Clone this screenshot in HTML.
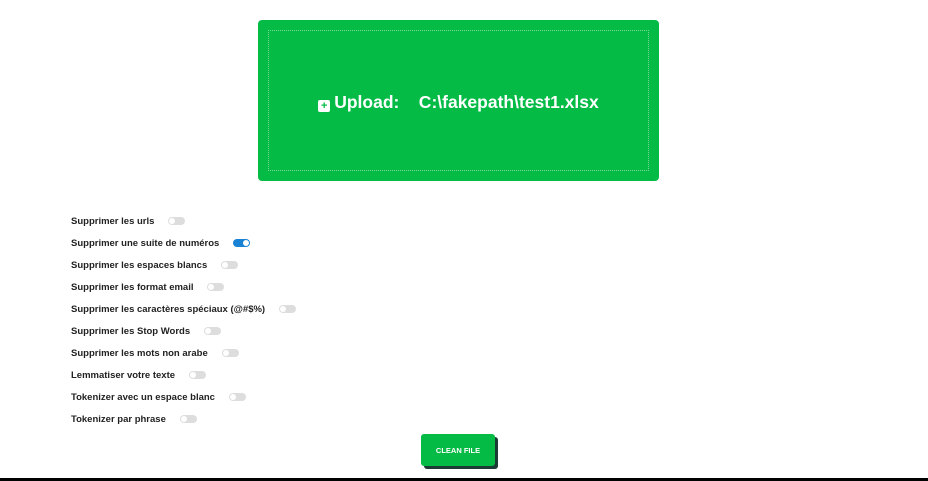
<!DOCTYPE html>
<html><head><style>
body{margin:0;width:928px;height:481px;background:#fff;position:relative;overflow:hidden;font-family:"Liberation Sans",sans-serif;}
.up{position:absolute;left:258px;top:20px;width:401px;height:161px;background:#04bb45;border-radius:4px;}
.in{position:absolute;left:10px;top:10px;right:10px;bottom:10px;border:1px dotted rgba(255,255,255,0.45);}
.t{position:absolute;left:0;right:0;top:72px;text-align:center;color:#fff;font-weight:bold;font-size:17.5px;}
.row{position:absolute;left:71px;font-size:9.5px;font-weight:bold;color:#222;height:12px;line-height:12px;}
.tg{display:inline-block;vertical-align:middle;width:17px;height:8px;border-radius:4px;background:#ddd;position:relative;margin-left:14px;margin-top:-1px;}
.tg::after{content:"";position:absolute;left:1px;top:1px;width:6px;height:6px;border-radius:50%;background:#fff;}
.tg.on{background:#1a82d4}.tg.on::after{left:10px}
.btn{position:absolute;left:421px;top:434px;width:74px;height:32px;background:#04bb45;border-radius:3px;box-shadow:3px 3px 0 #1c3b35;color:#fff;font-size:7.5px;font-weight:bold;text-align:center;line-height:34px;}
.bar{position:absolute;left:0;top:478px;width:928px;height:3px;background:#000;}
</style></head><body>
<div class="up"><div class="in"></div>
<div class="t"><span style="display:inline-block;width:12px;height:12px;background:#fff;border-radius:2px;vertical-align:-1px;margin-right:4px;color:#04bb45;font-size:11px;line-height:12px">+</span>Upload:&nbsp;&nbsp;&nbsp;&nbsp;C:\fakepath\test1.xlsx</div></div>
<div class="row" style="top:216px">Supprimer les urls<span class="tg"></span></div>
<div class="row" style="top:238px">Supprimer une suite de numéros<span class="tg on"></span></div>
<div class="row" style="top:260px">Supprimer les espaces blancs<span class="tg"></span></div>
<div class="row" style="top:282px">Supprimer les format email<span class="tg"></span></div>
<div class="row" style="top:304px">Supprimer les caractères spéciaux (@#$%)<span class="tg"></span></div>
<div class="row" style="top:326px">Supprimer les Stop Words<span class="tg"></span></div>
<div class="row" style="top:348px">Supprimer les mots non arabe<span class="tg"></span></div>
<div class="row" style="top:370px">Lemmatiser votre texte<span class="tg"></span></div>
<div class="row" style="top:392px">Tokenizer avec un espace blanc<span class="tg"></span></div>
<div class="row" style="top:414px">Tokenizer par phrase<span class="tg"></span></div>
<div class="btn">CLEAN FILE</div>
<div class="bar"></div>
</body></html>
